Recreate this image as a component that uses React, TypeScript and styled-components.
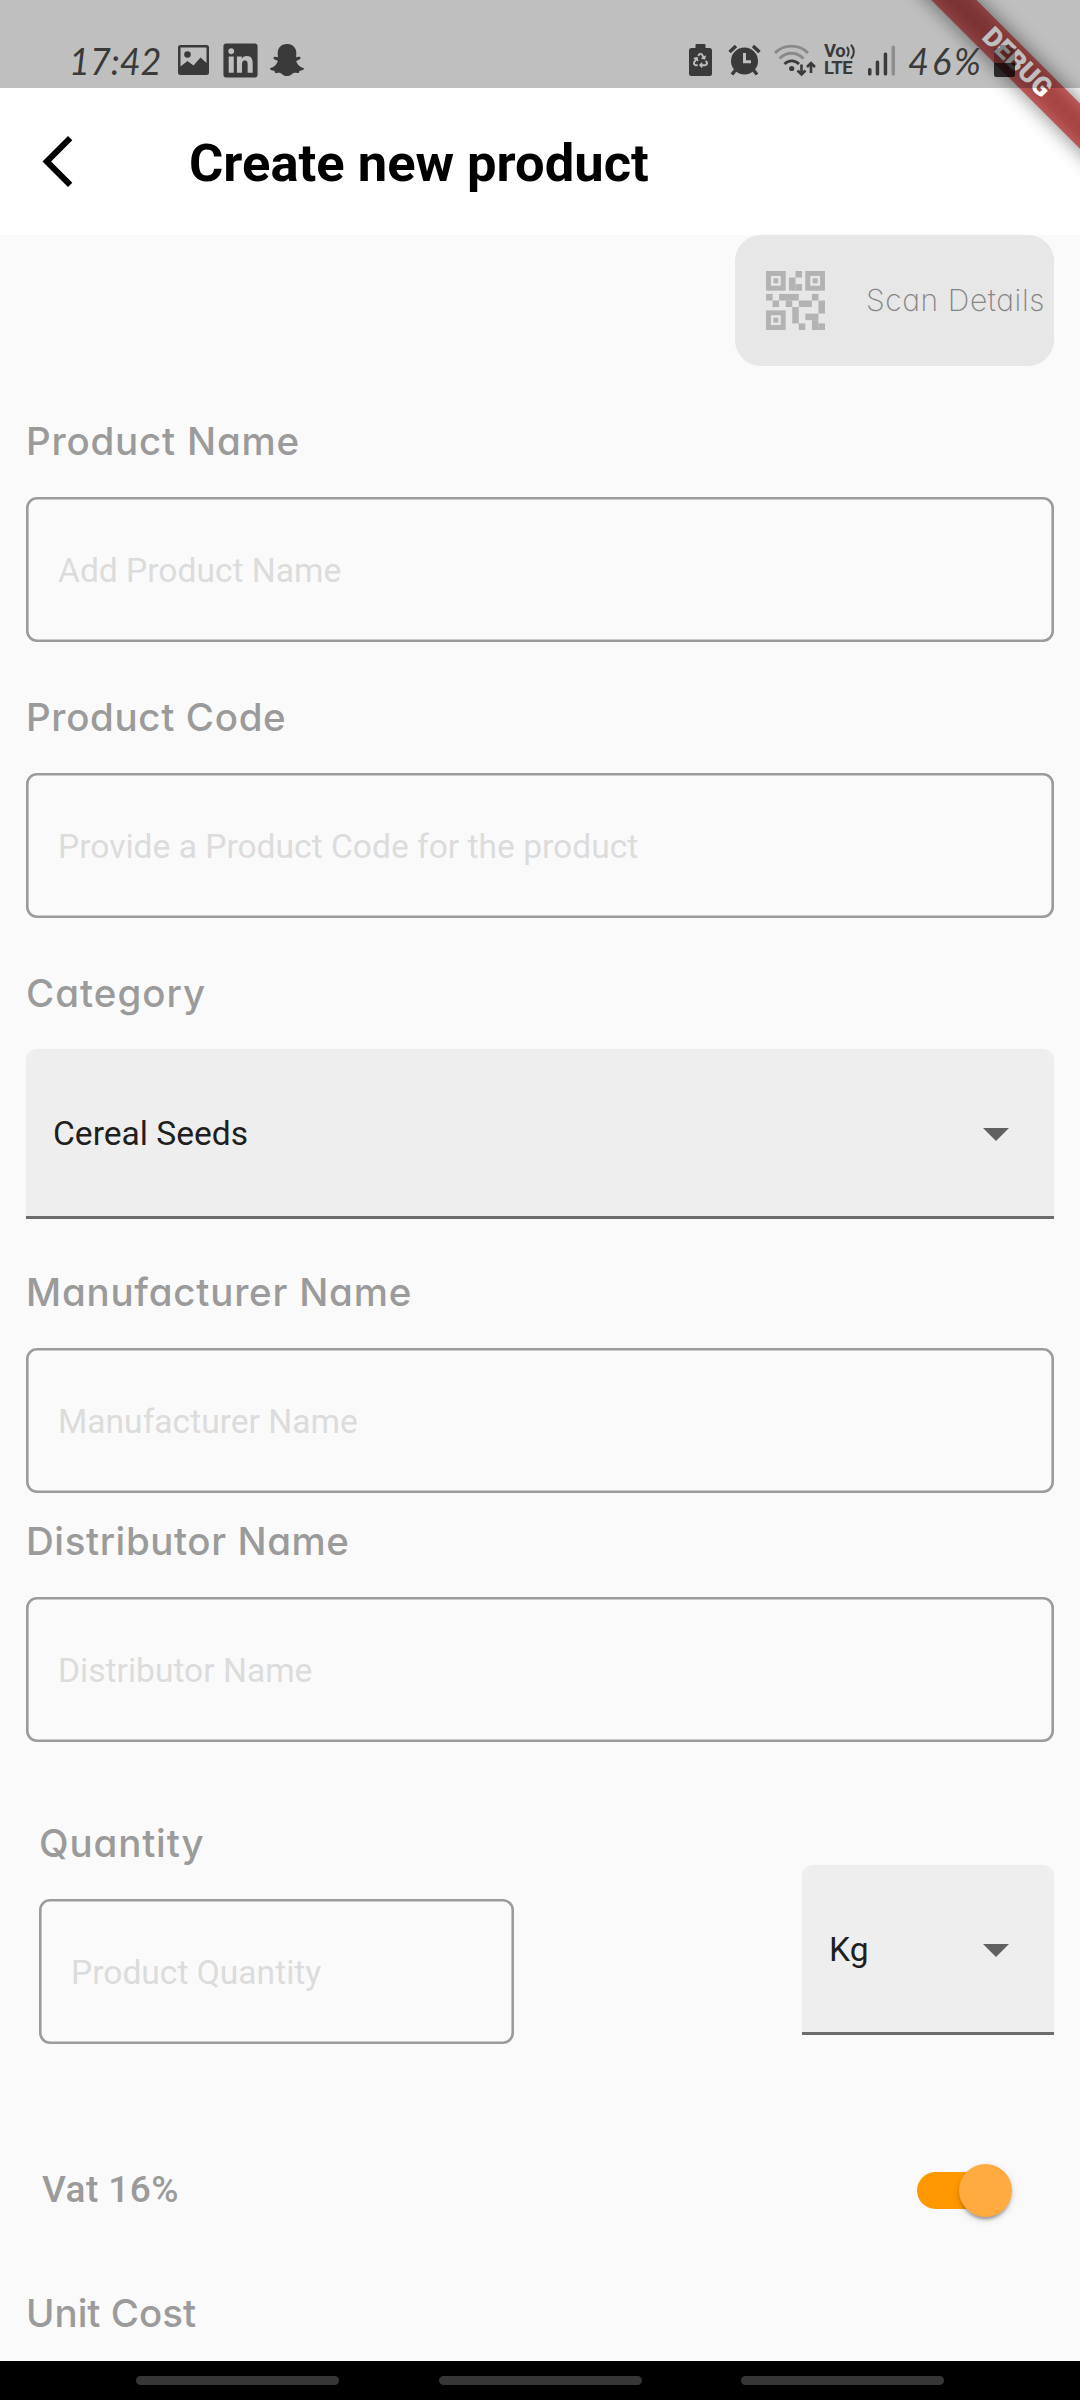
import React from "react";
import styled, { createGlobalStyle } from "styled-components";
import { FaLinkedin, FaRecycle, FaSnapchatGhost } from "react-icons/fa";

const GlobalStyle = createGlobalStyle`
  * { box-sizing: border-box; }
  body { margin: 0; background: #fafafa; font-family: Roboto, sans-serif; }
`;

const ink = "#3a3a3a";
const geometric = `Inter, "Open Sans", sans-serif`;

const Screen = styled.div`
  position: relative;
  width: 1080px;
  height: 2400px;
  overflow: hidden;
  display: flex;
  flex-direction: column;
  background: #fafafa;
`;

const StatusBar = styled.header`
  position: relative;
  z-index: 2;
  height: 88px;
  padding: 36px 65px 4px 69px;
  display: flex;
  align-items: center;
  background: rgba(0, 0, 0, 0.25);
  color: ${ink};
`;

const StatusBackdrop = styled.div`
  height: 88px;
  margin-bottom: -88px;
  background: #fff;
`;

const StatusText = styled.span<{ $width: number; $spacing: number; $left?: number }>`
  width: ${(p) => p.$width}px;
  margin-left: ${(p) => p.$left ?? 0}px;
  padding-top: 2px;
  font: italic 400 36px/48px Lato, sans-serif;
  letter-spacing: ${(p) => p.$spacing}px;
  white-space: nowrap;
`;

const StatusIcon = styled.span<{ $gap: number }>`
  display: flex;
  position: relative;
  margin-left: ${(p) => p.$gap}px;
  svg { display: block; }
`;

const Spacer = styled.span`
  flex: 1;
`;

const Recycle = styled(FaRecycle)`
  position: absolute;
  left: 4px;
  top: 9px;
  color: #bfbfbf;
`;

const Volte = styled.span`
  display: flex;
  flex-direction: column;
  width: 32px;
  margin-left: 8px;
  font: 700 18.5px/17px Roboto, sans-serif;
  white-space: nowrap;
`;

const VolteRow = styled.span<{ $spacing: number }>`
  display: flex;
  letter-spacing: ${(p) => p.$spacing}px;
  svg { margin-left: 1px; }
`;

const DebugBanner = styled.div`
  position: absolute;
  z-index: 1;
  left: 867px;
  top: 47px;
  width: 300px;
  height: 31.5px;
  transform: rotate(45deg);
  &::before {
    content: "";
    position: absolute;
    inset: 0;
    background: rgba(0, 0, 0, 0.5);
    filter: blur(10px);
  }
`;

const DebugLabel = styled.span`
  position: absolute;
  inset: 0;
  background: rgba(183, 28, 28, 0.63);
  color: #fff;
  font: 900 26.8px/31.5px Roboto, sans-serif;
  text-align: center;
`;

const AppBar = styled.div`
  height: 147px;
  padding: 0 42px;
  display: flex;
  align-items: center;
  background: #fff;
`;

const Title = styled.h1`
  margin: 3px 0 0 116px;
  font: 700 52.5px/62px Roboto, sans-serif;
  color: #000;
`;

const Form = styled.main`
  flex: 1;
  padding: 0 26px;
  display: flex;
  flex-direction: column;
`;

const ScanCard = styled.button`
  align-self: flex-end;
  width: 319px;
  height: 131px;
  padding: 0 0 0 31px;
  border: 0;
  border-radius: 26px;
  display: flex;
  align-items: center;
  background: #e7e7e7;
  color: #858585;
  svg { flex: none; margin-bottom: 1px; }
`;

const ScanText = styled.span`
  margin: 0 0 2px 41px;
  font: 200 30px/40px ${geometric};
  font-feature-settings: "cv11";
  letter-spacing: 0.6px;
  white-space: nowrap;
`;

const Field = styled.div<{ $top: number }>`
  margin-top: ${(p) => p.$top}px;
  display: flex;
  flex-direction: column;
  gap: 28px;
`;

const Label = styled.label<{ $spacing?: number; $plain?: boolean }>`
  height: 56px;
  font: 500 ${(p) => (p.$plain ? "37px/56px Roboto, sans-serif" : `38.5px/56px ${geometric}`)};
  font-feature-settings: "cv11";
  letter-spacing: ${(p) => p.$spacing ?? 0}px;
  color: #9b9b9b;
  white-space: nowrap;
`;

const Input = styled.input<{ $width?: string }>`
  width: ${(p) => p.$width ?? "100%"};
  height: 145px;
  padding: 2px 32px 0;
  border: 0;
  border-radius: 11px;
  outline: 0;
  background: transparent;
  box-shadow: inset 0 0 0 2.6px #9b9b9b;
  font: 400 33.6px/40px Roboto, sans-serif;
  &::placeholder { color: #dcdcdc; opacity: 1; }
`;

const Select = styled.div`
  height: 170px;
  padding: 2px 45px 0 27px;
  border-radius: 11px 11px 0 0;
  border-bottom: 3px solid #6c6c6c;
  display: flex;
  align-items: center;
  justify-content: space-between;
  background: #eee;
  color: #1f1f1f;
  font: 400 33.6px/40px Roboto, sans-serif;
  svg { margin-top: 1px; }
`;

const QuantityRow = styled.div`
  margin-top: 73px;
  display: flex;
  justify-content: space-between;
  align-items: flex-end;
`;

const QuantityField = styled(Field)`
  padding-left: 13px;
`;

const UnitSlot = styled.div`
  width: 252px;
  padding-bottom: 9px;
`;

const VatRow = styled.div`
  margin-top: 116px;
  height: 60px;
  padding: 0 42px 0 16px;
  display: flex;
  align-items: center;
  justify-content: space-between;
`;

const Track = styled.span`
  width: 95px;
  height: 37px;
  border-radius: 19px;
  display: flex;
  align-items: center;
  justify-content: flex-end;
  background: linear-gradient(#ff9800, #ff9800) left / 87px 100% no-repeat;
`;

const Thumb = styled.span`
  flex: none;
  width: 53px;
  height: 53px;
  border-radius: 50%;
  background: #ffab40;
  box-shadow: 0 5px 3px -3px rgba(0, 0, 0, 0.2), 0 3px 3px rgba(0, 0, 0, 0.14), 0 3px 8px rgba(0, 0, 0, 0.12);
`;

const NavBar = styled.nav`
  flex: none;
  height: 39px;
  padding-top: 15px;
  display: flex;
  justify-content: center;
  gap: 99.5px;
  background: #000;
`;

const NavPill = styled.span`
  width: 203px;
  height: 9px;
  border-radius: 5px;
  background: #363636;
`;

const qrCells: [number, number, number, number][] = [
  [9, 0, 2, 2], [7, 2, 2, 4], [9, 4, 2, 2],
  [0, 7, 2, 2], [4, 7, 6, 2], [14, 7, 2, 2],
  [2, 9, 2, 2], [6, 9, 2, 2], [10, 9, 4, 2], [16, 9, 2, 4],
  [8, 11, 2, 5], [12, 13, 4, 2], [14, 15, 2, 3], [16, 16, 2, 2], [10, 16, 2, 2],
];

const QrIcon = () => (
  <svg width="59" height="59" viewBox="0 0 18 18" fill="#b3b3b3">
    {[[0, 0], [12, 0], [0, 12]].map(([x, y]) => (
      <g key={`${x}-${y}`}>
        <rect x={x + 0.75} y={y + 0.75} width="4.5" height="4.5" fill="none" stroke="#b3b3b3" strokeWidth="1.5" />
        <rect x={x + 2.25} y={y + 2.25} width="1.5" height="1.5" />
      </g>
    ))}
    {qrCells.map(([x, y, w, h]) => (
      <rect key={`${x}-${y}`} x={x} y={y} width={w} height={h} />
    ))}
  </svg>
);

const Caret = () => (
  <svg width="26" height="13" viewBox="0 0 26 13">
    <path d="M0 0h26L13 13z" fill="#616161" />
  </svg>
);

const PictureIcon = () => (
  <svg width="31" height="30" viewBox="0 0 31 30">
    <path fill={ink} fillRule="evenodd" d="M2.5 0h26A2.5 2.5 0 0 1 31 2.500v25a2.500 2.500 0 0 1-2.500 2.500h-26A2.500 2.500 0 0 1 0 27.500v-25A2.500 2.500 0 0 1 2.500 0zM2.500 2.500v19l7-5.500 6 4.500 7-8 6 5.500V2.500z" />
    <circle cx="9.500" cy="9.500" r="3.300" fill={ink} />
  </svg>
);

const BatterySaverIcon = () => (
  <svg width="23" height="32" viewBox="0 0 23 32" fill={ink}>
    <rect y="4" width="23" height="28" rx="2.500" />
    <rect x="6.500" width="10" height="6" rx="1" />
  </svg>
);

const AlarmIcon = () => (
  <svg width="33" height="32" viewBox="0 0 33 32" fill="none" stroke={ink} strokeWidth="3.400">
    <circle cx="16.500" cy="17" r="13.500" fill={ink} stroke="none" />
    <path d="M1.500 8 8 2M31.500 8 25 2M7.500 26 4 30.500M25.500 26l3.500 4.500" />
    <path d="M16.500 9v8.800H23" stroke="#bfbfbf" strokeWidth="3" />
  </svg>
);

const WifiIcon = () => (
  <svg width="42" height="33" viewBox="0 0 42 33" fill="none" strokeWidth="2.800">
    <path d="M1 9C10-.2 25-.2 34 9M5.500 14.500c7-7 17-7 24 0" stroke="#8a8a8a" />
    <path d="M10.500 20c4-4.200 10.500-4.200 14.500 0" stroke={ink} />
    <circle cx="17.700" cy="24.500" r="2.600" fill={ink} />
    <path d="M27.500 20.500v10M23.500 26.500l4 4 4-4M37 29V19M33 23l4-4 4 4" stroke={ink} strokeWidth="2.600" />
  </svg>
);

const WavesIcon = () => (
  <svg width="11" height="17" viewBox="0 0 11 17" fill="none" stroke={ink} strokeWidth="2.200">
    <path d="M1 3.500c2.600 3 2.600 7.500 0 10.500M5.500 1c4.300 4.500 4.300 11 0 15.500" />
  </svg>
);

const SignalIcon = () => (
  <svg width="27" height="31" viewBox="0 0 27 31" fill={ink}>
    <rect y="23" width="3.500" height="7.500" rx="1.500" />
    <rect x="7.700" y="15.500" width="3.500" height="15" rx="1.500" />
    <rect x="15.700" y="7.500" width="3.500" height="23" rx="1.500" />
    <rect x="23.500" y="0.500" width="3.500" height="30" rx="1.500" fill="#8f8f8f" />
  </svg>
);

const ChargeIcon = () => (
  <svg width="21" height="33" viewBox="0 0 21 33">
    <path d="M0 6a2 2 0 0 1 2-2h4V1h9v3h4a2 2 0 0 1 2 2v13H0z" fill="#000" opacity=".3" />
    <path d="M0 19h21v12a2 2 0 0 1-2 2H2a2 2 0 0 1-2-2z" fill="#000" opacity=".75" />
  </svg>
);

const BackIcon = () => (
  <svg width="31" height="51" viewBox="0 0 31 51">
    <path d="M26 0l4.300 4.300L9.100 25.500 30.300 46.700 26 51 .5 25.500z" fill="#000" />
  </svg>
);

export default function App() {
  return (
    <Screen>
      <GlobalStyle />
      <StatusBackdrop />
      <StatusBar>
        <StatusText $width={95} $spacing={0}>17:42</StatusText>
        <StatusIcon $gap={14}><PictureIcon /></StatusIcon>
        <StatusIcon $gap={12}><FaLinkedin size={39} /></StatusIcon>
        <StatusIcon $gap={10}><FaSnapchatGhost size={34} /></StatusIcon>
        <Spacer />
        <StatusIcon $gap={0}><BatterySaverIcon /><Recycle size={15} /></StatusIcon>
        <StatusIcon $gap={16}><AlarmIcon /></StatusIcon>
        <StatusIcon $gap={13}><WifiIcon /></StatusIcon>
        <Volte>
          <VolteRow $spacing={-0.5}>Vo<WavesIcon /></VolteRow>
          <VolteRow $spacing={-0.6}>LTE</VolteRow>
        </Volte>
        <StatusIcon $gap={12}><SignalIcon /></StatusIcon>
        <StatusText $width={86} $left={13} $spacing={3}>46%</StatusText>
        <StatusIcon $gap={0}><ChargeIcon /></StatusIcon>
      </StatusBar>
      <DebugBanner><DebugLabel>DEBUG</DebugLabel></DebugBanner>
      <AppBar>
        <BackIcon />
        <Title>Create new product</Title>
      </AppBar>
      <Form>
        <ScanCard>
          <QrIcon />
          <ScanText>Scan Details</ScanText>
        </ScanCard>
        <Field $top={47}>
          <Label $spacing={0.8}>Product Name</Label>
          <Input placeholder="Add Product Name" />
        </Field>
        <Field $top={47}>
          <Label $spacing={0.65}>Product Code</Label>
          <Input placeholder="Provide a Product Code for the product" />
        </Field>
        <Field $top={47}>
          <Label $spacing={1}>Category</Label>
          <Select>Cereal Seeds<Caret /></Select>
        </Field>
        <Field $top={45}>
          <Label $spacing={0.78}>Manufacturer Name</Label>
          <Input placeholder="Manufacturer Name" />
        </Field>
        <Field $top={20}>
          <Label $spacing={0.58}>Distributor Name</Label>
          <Input placeholder="Distributor Name" />
        </Field>
        <QuantityRow>
          <QuantityField $top={0}>
            <Label $spacing={0.86}>Quantity</Label>
            <Input $width="475px" placeholder="Product Quantity" />
          </QuantityField>
          <UnitSlot>
            <Select>Kg<Caret /></Select>
          </UnitSlot>
        </QuantityRow>
        <VatRow>
          <Label $plain $spacing={0.45}>Vat 16%</Label>
          <Track><Thumb /></Track>
        </VatRow>
        <Field $top={65}>
          <Label>Unit Cost</Label>
        </Field>
      </Form>
      <NavBar>
        <NavPill />
        <NavPill />
        <NavPill />
      </NavBar>
    </Screen>
  );
}
